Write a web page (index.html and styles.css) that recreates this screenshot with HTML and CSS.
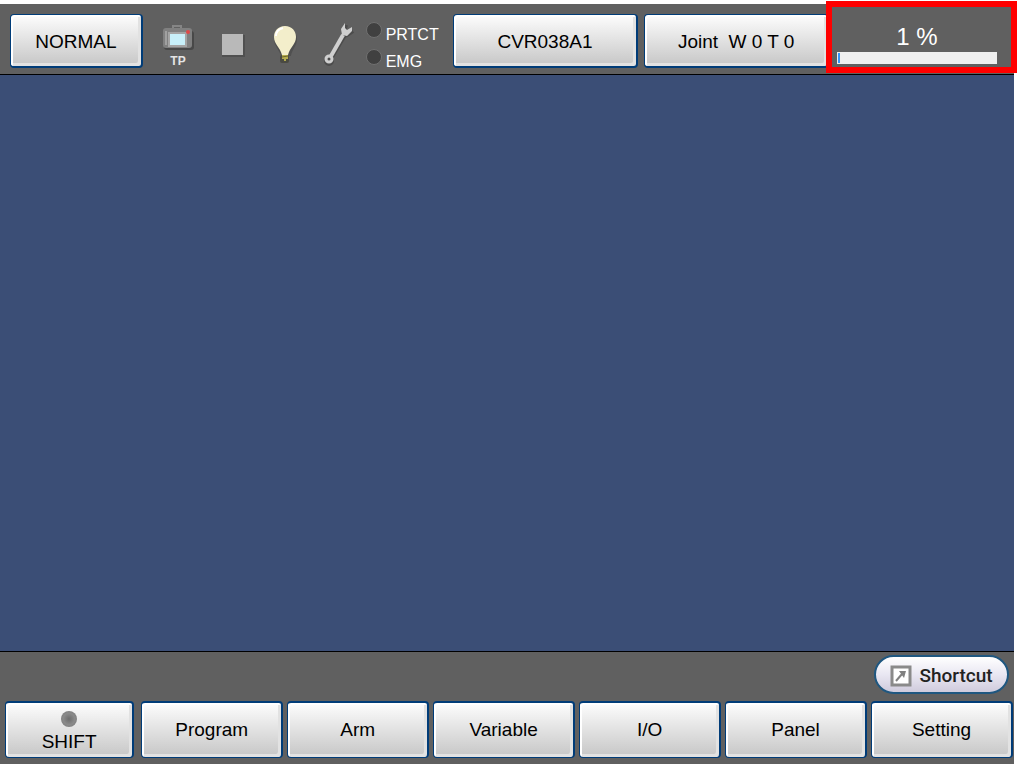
FILE: index.html
```html
<!DOCTYPE html>
<html lang="en">
<head>
    <meta charset="UTF-8">
    <meta name="viewport" content="width=device-width, initial-scale=1.0">
    <title>Robot Pendant</title>
    <link rel="stylesheet" href="styles.css">
</head>
<body>

    <div class="screen">
        <!-- Status bar -->
        <header class="top-bar">
            <button class="btn mode-btn" type="button">NORMAL</button>

            <div class="status-icons">
                <svg class="icon-tp" viewBox="0 0 36 44" role="img" aria-label="Teach pendant">
                    <rect x="3" y="8" width="30" height="19" rx="3" fill="#484848"/>
                    <path d="M12 6V3h8v3" fill="none" stroke="#858585" stroke-width="2"/>
                    <rect x="2" y="5" width="29" height="20" rx="3" fill="#808080"/>
                    <rect x="4" y="8" width="2" height="14" fill="#a0a0a0"/>
                    <rect x="7" y="9" width="19" height="15" fill="#a4a4a4"/>
                    <rect x="9" y="11" width="15" height="11" fill="#c8f0fa"/>
                    <circle cx="27" cy="9" r="2" fill="#e04848"/>
                    <text x="17" y="42" text-anchor="middle" class="icon-label">TP</text>
                </svg>
                <svg class="icon-stop" viewBox="0 0 26 26" role="img" aria-label="Stopped">
                    <rect x="1" y="3" width="23" height="22" fill="#505050"/>
                    <rect x="1" y="2" width="21" height="21" fill="#b9b9b9"/>
                </svg>
                <svg class="icon-bulb" viewBox="0 0 28 40" role="img" aria-label="Lamp">
                    <path d="M15 3C7 3 3 8 3 14c0 7 5 10 7 17h10c1-7 6-10 6-17C26 8 22 3 15 3z" fill="#505050"/>
                    <rect x="9" y="30" width="9" height="8" rx="2" fill="#4a4a42"/>
                    <path d="M14 1C7 1 3 6 3 12c0 7 6 10 8 18h6c2-8 8-11 8-18C25 6 21 1 14 1z" fill="#f3eecb"/>
                    <path d="M5 11c0-4 3-7 7-8" fill="none" stroke="#fff" stroke-width="2"/>
                    <path d="M11 30h6v4h-2v2h-2v-2h-2z" fill="#b5ac4e"/>
                    <path d="M11 32l6-1" stroke="#6b652a"/>
                </svg>
                <svg class="icon-wrench" viewBox="0 0 32 46" role="img" aria-label="Maintenance">
                    <g fill="none" stroke="#4c4c4c" stroke-width="4" transform="translate(1 1)">
                        <path d="M21 12L8 34"/>
                        <path d="M22 2l-2 7 3 3 6-4"/>
                        <circle cx="5" cy="38" r="3"/>
                    </g>
                    <g fill="none" stroke="#cfcfcf">
                        <path d="M20 13L8 34" stroke-width="4"/>
                        <path d="M22 1l-4 6 1 6 5 1 5-5V5l-5 3-2-2z" fill="#cfcfcf" stroke="none"/>
                        <circle cx="6" cy="37" r="3" stroke-width="3"/>
                    </g>
                </svg>
            </div>

            <ul class="lamps">
                <li><span class="lamp"></span>PRTCT</li>
                <li><span class="lamp"></span>EMG</li>
            </ul>

            <button class="btn robot-btn" type="button">CVR038A1</button>
            <button class="btn coord-btn" type="button">Joint  W 0 T 0</button>

            <div class="speed">
                <label for="speedBar">1 %</label>
                <progress id="speedBar" value="1" max="100"></progress>
            </div>
            <div class="highlight"></div>
        </header>

        <main class="work-area"></main>

        <!-- Function keys -->
        <footer class="bottom-bar">
            <button class="shortcut-btn" type="button">
                <svg class="icon-shortcut" viewBox="0 0 22 22" aria-hidden="true">
                    <rect x="2" y="2" width="18" height="18" fill="#fff" stroke="#8a8a8a" stroke-width="3"/>
                    <path d="M6 16l6-7" fill="none" stroke="#808080" stroke-width="2"/>
                    <path d="M9 6h7l-2 7z" fill="#808080"/>
                </svg>
                Shortcut
            </button>
            <nav class="keys">
                <button class="btn shift-btn" type="button"><span class="shift-lamp"></span>SHIFT</button>
                <button class="btn" type="button">Program</button>
                <button class="btn" type="button">Arm</button>
                <button class="btn" type="button">Variable</button>
                <button class="btn" type="button">I/O</button>
                <button class="btn" type="button">Panel</button>
                <button class="btn" type="button">Setting</button>
            </nav>
        </footer>
    </div>

</body>
</html>
```

FILE: styles.css
```css
* {
    box-sizing: border-box;
}

body {
    margin: 0;
    background-color: #fff;
    font-family: "Liberation Sans", Arial, sans-serif;
    font-size: 19px;
}

.screen {
    display: flex;
    flex-direction: column;
    min-height: 100vh;
    padding: 4px 4px 0 0;
}

.top-bar {
    position: relative;
    display: flex;
    align-items: flex-start;
    padding: 10px 12px 6px 10px;
    background-color: #606060;
    border-bottom: 1px solid #000;
}

.btn {
    height: 54px;
    padding: 2px 0 0;
    font: inherit;
    color: #000;
    white-space: pre;
    background: linear-gradient(#fdfdfd, #c6c6c6);
    border: solid #003c78;
    border-width: 1px 2px 2px 1px;
    border-radius: 4px;
    box-shadow: inset 2px 2px 0 #fff, inset -3px -3px 0 #e2e2e2;
}

.mode-btn {
    flex: 132;
}

.status-icons {
    display: flex;
    align-items: center;
    gap: 24px;
    height: 54px;
    padding: 8px 11px 0 18px;
}

.icon-tp {
    width: 36px;
    height: 44px;
}

.icon-label {
    font-size: 12px;
    font-weight: bold;
    fill: #e4e4e4;
}

.icon-stop {
    width: 26px;
    height: 26px;
}

.icon-bulb {
    width: 28px;
    height: 40px;
}

.icon-wrench {
    width: 32px;
    height: 46px;
}

.lamps {
    width: 87px;
    height: 54px;
    margin: 0;
    padding: 7px 0 0;
    list-style: none;
    color: #fff;
    font-size: 16px;
    line-height: 27px;
}

.lamps li {
    display: flex;
    gap: 4px;
}

.lamp {
    width: 16px;
    height: 16px;
    margin-top: 1px;
    background-color: #404040;
    border: 1px solid #707070;
    border-radius: 50%;
}

.robot-btn {
    flex: 186;
}

.coord-btn {
    flex: 185;
    margin-left: 6px;
}

.speed {
    width: 173px;
    padding: 8px 5px 0 8px;
    color: #fff;
    text-align: center;
}

.speed label {
    display: block;
    font-size: 24px;
    line-height: 30px;
}

.speed progress {
    display: block;
    width: 160px;
    height: 12px;
    padding: 1px;
    appearance: none;
    background-color: #efefef;
    border: none;
}

.speed progress::-webkit-progress-bar {
    background-color: #efefef;
}

.speed progress::-webkit-progress-value {
    min-width: 2px;
    background-color: #3296ff;
}

/* frame over the speed display */
.highlight {
    position: absolute;
    top: -3px;
    right: -3px;
    width: 191px;
    height: 72px;
    border: 6px solid #f00;
    pointer-events: none;
}

.work-area {
    flex: 1;
    background-color: #3b4e76;
}

.bottom-bar {
    display: flex;
    flex-direction: column;
    gap: 7px;
    padding: 3px 1px 6px 5px;
    background-color: #606060;
    border-top: 1px solid #000;
}

.shortcut-btn {
    display: flex;
    align-items: center;
    justify-content: center;
    align-self: flex-end;
    gap: 7px;
    width: 135px;
    height: 39px;
    margin-right: 4px;
    padding: 2px 0 0;
    font-family: Roboto, sans-serif;
    font-size: 19px;
    font-weight: 500;
    color: #222;
    background: linear-gradient(#fff, #e9e7f2 50%, #cfcbdc);
    border: 2px solid #1f5780;
    border-radius: 20px;
}

.icon-shortcut {
    width: 22px;
    height: 22px;
}

.keys {
    display: flex;
    gap: 4px;
}

.keys .btn {
    flex: 142;
    height: 57px;
    padding: 0;
    border-width: 2px 2px 1px 1px;
}

.keys .shift-btn {
    display: flex;
    flex: 129;
    flex-direction: column;
    align-items: center;
    margin-right: 3px;
    padding-top: 8px;
}

.shift-lamp {
    width: 16px;
    height: 16px;
    margin-bottom: 4px;
    background: radial-gradient(#6c6c6c, #8a8a8a 50%, #777);
    border-radius: 50%;
}
```
